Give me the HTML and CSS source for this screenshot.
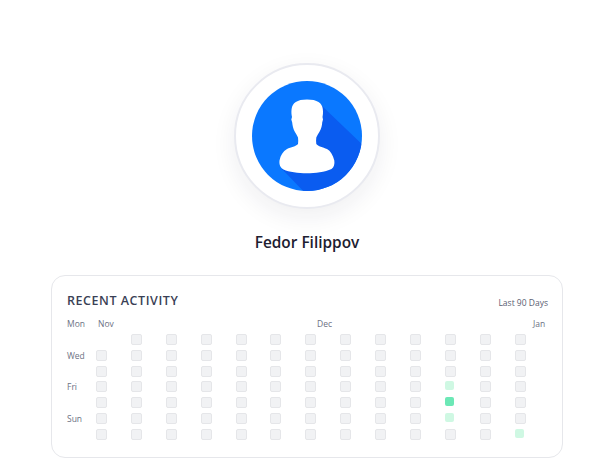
FILE: index.html
```html
<!DOCTYPE html>
<html lang="en">
<head>
<meta charset="utf-8">
<title>Fedor Filippov</title>
<link rel="stylesheet" href="styles.css">
</head>
<body>
<main class="page">
  <div class="avatar">
    <svg class="avatar-img" viewBox="0 0 110 110" width="110" height="110" aria-hidden="true">
      <defs><clipPath id="disc"><circle cx="55" cy="55" r="55"/></clipPath></defs>
      <circle cx="55" cy="55" r="55" fill="#0a78ff"/>
      <polygon clip-path="url(#disc)" points="69,24 115,68 115,115 56,115 30,88" fill="#0a5cf0"/>
      <path fill="#fff" d="M55 18.500C60 18.500 64 19.300 66.500 21C69 22.600 70.400 25 70.800 28C71.200 31 71 34 70.500 36L71 38.500L70.200 41.500C70.200 44 69.200 48 67.500 50.800C66.300 53 65 54.800 64.300 56.500C64 58.500 64 61 64.300 63C66 65.500 71 66.300 75 68C78.500 70 81 74 82.300 79.500C82.800 83 82 86.500 79.500 88C73 91 63 92.300 55 92.300C46 92.300 37 91 31.500 88.500C28.500 87 27 83.500 27.500 79.500C28.500 74 31 70.500 35 68C39 66 44 65.500 46 63C46.300 61 46.300 58.500 46 56.500C45.300 54.800 44 53 42.800 50.800C41.200 48 40.400 44 40.200 41.500L39.300 38.500L40 36C39.500 34 39.200 31 39.600 28C40 25 41.300 22.600 43.800 21C46.300 19.300 50 18.500 55 18.500Z"/>
    </svg>
  </div>
  <h1 class="name">Fedor Filippov</h1>
  <section class="card">
    <header class="card-head">
      <h2 class="card-title">RECENT ACTIVITY</h2>
      <span class="range">Last 90 Days</span>
    </header>
    <div class="months">
      <span class="mon-label">Mon</span>
      <span class="month month-nov">Nov</span>
      <span class="month month-dec">Dec</span>
      <span class="month month-jan">Jan</span>
    </div>
    <div class="heat">
      <div class="days">
        <span></span><span>Wed</span><span></span><span>Fri</span><span></span><span>Sun</span><span></span>
      </div>
      <div class="grid" id="grid">
        <i class="gap"></i><i></i><i></i><i></i><i></i><i></i><i></i><i></i><i></i><i></i><i></i><i></i><i></i>
        <i></i><i></i><i></i><i></i><i></i><i></i><i></i><i></i><i></i><i></i><i></i><i></i><i></i>
        <i></i><i></i><i></i><i></i><i></i><i></i><i></i><i></i><i></i><i></i><i></i><i></i><i></i>
        <i></i><i></i><i></i><i></i><i></i><i></i><i></i><i></i><i></i><i></i><i class="lv1"></i><i></i><i></i>
        <i></i><i></i><i></i><i></i><i></i><i></i><i></i><i></i><i></i><i></i><i class="lv2"></i><i></i><i></i>
        <i></i><i></i><i></i><i></i><i></i><i></i><i></i><i></i><i></i><i></i><i class="lv1"></i><i></i><i></i>
        <i></i><i></i><i></i><i></i><i></i><i></i><i></i><i></i><i></i><i></i><i></i><i></i><i class="lv1"></i>
      </div>
    </div>
  </section>
</main>
</body>
</html>
```
FILE: styles.css
```css
* { box-sizing: border-box; }
html, body { margin: 0; height: 100%; background: #fff; overflow: hidden; }
body { font-family: "Open Sans", "Noto Sans", sans-serif; color: #1f2333; }
.page { display: flex; flex-direction: column; align-items: center; padding: 63px 2px 0 0; }
.avatar {
  width: 146px; height: 146px; border-radius: 50%;
  background: #fff; border: 2px solid #e9eaf0;
  box-shadow: 0 8px 24px rgba(30, 35, 60, 0.07);
  display: flex; align-items: center; justify-content: center;
}
.avatar-img { display: block; }
.name { margin: 23px 0 0; font-size: 15.4px; line-height: 22px; font-weight: 600; color: #1d2030; }
.card {
  width: 512px; height: 183px; margin-top: 21px;
  border: 1px solid #e6e7eb; border-radius: 14px;
  padding: 15px 14px 0 15px; background: #fff;
}
.card-head { display: flex; justify-content: space-between; align-items: center; height: 20px; }
.card-title { margin: 0; font-size: 12.5px; line-height: 20px; font-weight: 600; letter-spacing: 0.55px; color: #3a3f55; }
.range { font-size: 8.5px; color: #5a6072; padding-top: 2px; }
.months { display: flex; height: 14px; margin-top: 6px; font-size: 8.5px; line-height: 14px; color: #6c7183; }
.mon-label { width: 31px; }
.month-nov { width: 219px; }
.month-dec { width: 216px; }
.heat { display: flex; margin-top: 3px; }
.days { flex: none; width: 29px; display: grid; grid-template-rows: repeat(7, 15.75px); font-size: 8.5px; line-height: 11px; color: #6c7183; }
.grid { flex: none; display: grid; grid-template-columns: repeat(13, 34.9px); grid-template-rows: repeat(7, 15.75px); }
.grid i { display: block; width: 11px; height: 11px; background: #f1f2f4; border: 1px solid #e5e6e9; border-radius: 2px; }
.grid i.gap { visibility: hidden; }
.grid i.lv1 { width: 9px; height: 9px; background: #cff8e3; border: 0; }
.grid i.lv2 { width: 9px; height: 9px; background: #6ce8b6; border: 0; }
```
